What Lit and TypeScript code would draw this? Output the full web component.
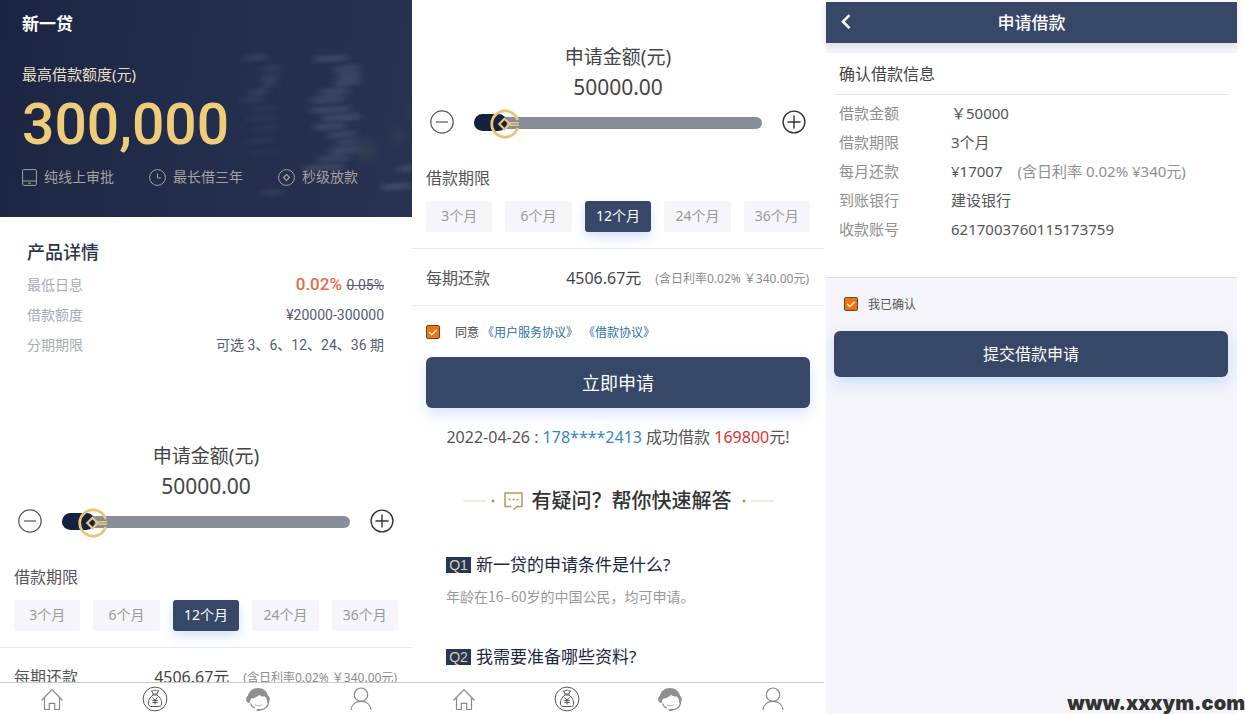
import { LitElement, html, svg, css } from "lit";
import { customElement, property, state } from "lit/decorators.js";

const base = css`
  * {
    box-sizing: border-box;
  }
  button {
    font-family: inherit;
    border: 0;
    padding: 0;
    margin: 0;
    cursor: pointer;
  }
  a {
    text-decoration: none;
  }
  .check {
    appearance: none;
    flex: none;
    width: 14px;
    height: 14px;
    margin: 0;
    border: 1px solid #5d4a3c;
    border-radius: 2px;
    background: #ee7410
      url("data:image/svg+xml,%3Csvg xmlns='http://www.w3.org/2000/svg' viewBox='0 0 12 12'%3E%3Cpath d='M2.2 6l2.6 2.7 5-5' fill='none' stroke='%23ffe9d2' stroke-width='1.4'/%3E%3C/svg%3E")
      center / 12px 12px no-repeat;
  }
  .check:not(:checked) {
    background: #fff;
  }
  .primary {
    display: block;
    width: 100%;
    padding-bottom: 2px;
    border-radius: 6px;
    background: #364768;
    color: #fff;
    box-shadow: 0 6px 14px rgba(150, 190, 245, 0.4);
  }
`;

@customElement("loan-form")
export class LoanForm extends LitElement {
  @property({ type: Number }) amount = 50000;
  @property({ type: Number }) months = 12;

  static styles = [
    base,
    css`
      :host {
        display: block;
        color: #444;
      }
      .top {
        padding: 42px 0 16px;
        border-bottom: 1px solid #e6e8ec;
      }
      .caption,
      .amount {
        display: block;
        text-align: center;
        line-height: 30px;
      }
      .caption {
        font-size: 19px;
      }
      .amount {
        font-size: 21px;
      }
      .slider {
        display: flex;
        align-items: center;
        gap: 20px;
        height: 40px;
        padding: 0 18px;
      }
      .step {
        flex: none;
        width: 24px;
        height: 24px;
        background: none;
      }
      .step svg {
        display: block;
      }
      .track {
        position: relative;
        flex: 1;
        display: flex;
        align-items: center;
        height: 32px;
        padding-top: 2px;
      }
      .track::before {
        content: "";
        flex: 1;
        height: 12px;
        border-radius: 6px;
        background: #888d9a;
      }
      .fill {
        position: absolute;
        left: 0;
        top: 8px;
        height: 17px;
        border-radius: 9px;
        background: #14213f;
      }
      .range {
        appearance: none;
        position: absolute;
        inset: 0;
        width: 100%;
        height: 32px;
        margin: 0;
        background: none;
      }
      .range::-webkit-slider-thumb {
        appearance: none;
        width: 30px;
        height: 30px;
        margin-top: 3px;
        background: url("data:image/svg+xml,%3Csvg xmlns='http://www.w3.org/2000/svg' viewBox='0 0 30 30' fill='none' stroke='%23e9c576'%3E%3Cpath d='M27.6 18.8A13.2 13.2 0 1 1 27.6 11.2' stroke-width='2.8'/%3E%3Cpath d='M14.5 9.8L19.7 15l-5.2 5.2L9.300 15z' stroke-width='2.200'/%3E%3Cpath d='M19.500 13.800H29M19.500 16.200H29' stroke-width='1.600'/%3E%3C/svg%3E")
          center / 30px 30px no-repeat;
      }
      .label {
        margin: 22px 14px 9px;
        font-size: 16px;
        line-height: 28px;
        font-weight: 400;
        color: #555;
      }
      .terms {
        display: grid;
        grid-template-columns: repeat(5, 1fr);
        gap: 13px;
        padding: 0 14px;
      }
      .term {
        height: 31px;
        padding-bottom: 2px;
        border-radius: 3px;
        background: #f5f5fa;
        color: #999;
        font-size: 14px;
        line-height: 29px;
      }
      .term.on {
        background: #364768;
        color: #fff;
        box-shadow: 0 5px 12px rgba(150, 190, 245, 0.45);
      }
      .pay {
        display: flex;
        align-items: center;
        height: 57px;
        padding: 0 15px 0 14px;
        border-bottom: 1px solid #e6e8ec;
        font-size: 16px;
        white-space: nowrap;
      }
      .pay-label {
        flex: 1;
        color: #555;
      }
      .rate {
        margin-left: 14px;
        padding-top: 2px;
        font-size: 12px;
        color: #8c8c8c;
      }
    `,
  ];

  render() {
    const ratio = (this.amount - 34000) / 266000;
    return html`
      <div class="top">
        <label class="caption" for="range">申请金额(元)</label>
        <output class="amount">${this.amount.toFixed(2)}</output>
        <div class="slider">
          <button class="step" aria-label="减少" @click=${() => (this.amount -= 1000)}>
            <svg width="24" height="24" viewBox="0 0 24 24" fill="none" stroke="#555" stroke-width="1.2">
              <circle cx="12" cy="12" r="11.200" />
              <path d="M6 12H18" />
            </svg>
          </button>
          <div class="track">
            <span class="fill" style="width:calc(15px + ${ratio} * (100% - 30px) + 2px)"></span>
            <input
              id="range"
              class="range"
              type="range"
              min="34000"
              max="300000"
              step="1000"
              .value=${String(this.amount)}
              @input=${(e: Event) => (this.amount = Number((e.target as HTMLInputElement).value))}
            />
          </div>
          <button class="step" aria-label="增加" @click=${() => (this.amount += 1000)}>
            <svg width="24" height="24" viewBox="0 0 24 24" fill="none" stroke="#333" stroke-width="1.4">
              <circle cx="12" cy="12" r="10.900" />
              <path d="M5.500 12H18.500M12 5.500V18.500" />
            </svg>
          </button>
        </div>
        <h3 class="label">借款期限</h3>
        <div class="terms">
          ${[3, 6, 12, 24, 36].map(
            (m) => html`<button class="term ${m === this.months ? "on" : ""}" @click=${() => (this.months = m)}>${m}个月</button>`
          )}
        </div>
      </div>
      <div class="pay">
        <span class="pay-label">每期还款</span>
        <span>4506.67元</span>
        <span class="rate">(含日利率0.02% ￥340.00元)</span>
      </div>
    `;
  }
}

@customElement("tab-bar")
export class TabBar extends LitElement {
  static styles = css`
    :host {
      display: grid;
      grid-template-columns: repeat(4, 1fr);
      flex: none;
      border-top: 1px solid #c9c9c9;
      background: #fff;
    }
    .tab {
      display: flex;
      justify-content: center;
      padding: 3px 0 2px;
    }
    .tab svg {
      display: block;
    }
  `;

  render() {
    const icons = [
      { name: "首页", art: svg`<path d="M2.500 14.500L13 3.500L23.500 14.500M5.500 12V23.500H10.300V17.300H15.700V23.500H20.500V12" stroke="#888" stroke-width="1.200"/>` },
      {
        name: "借款",
        art: svg`<g stroke="#555" stroke-width="1"><circle cx="13" cy="13" r="11.900"/><path d="M9.500 4.800C11 5.600 11.800 4.200 13 4.200S15 5.600 16.500 4.800L14.800 8H11.200zM10.200 9H15.800M11 9C7.500 11.500 6 15 6.500 18.200C6.800 20 8 20.500 10 20.500H16C18 20.500 19.200 20 19.500 18.200C20 15 18.500 11.500 15 9M10.500 11.500L13 14.200L15.500 11.500M13 14.200V18.500M10.300 14.500H15.700M10.300 16.500H15.700"/></g>`,
      },
      {
        name: "客服",
        art: svg`<path d="M4.600 17.200C2.500 17 1.200 15.500 1.200 13.500C1.200 11.800 1.800 10.600 2.800 10C3.800 5 7.800 2 13 2S22 5 23.200 10C24.300 10.600 24.900 11.800 24.800 13.500C24.700 15.300 23.700 16.600 22 17C22.300 14 21.500 11.800 19.800 10.500C17.500 10.800 15.500 10 14 9C12 11 9 12.300 6.500 12.500C5.300 13.800 4.700 15.300 4.600 17.200z" fill="#8f8f8f"/><path d="M5.500 17.500C6.300 19.800 7.800 21.300 9.800 22.200M23.700 16C23.200 20.500 20 23.700 14.500 24" stroke="#8f8f8f" stroke-width="1.300"/><path d="M10 18.700C12 20.200 15 20.200 17 18.700" stroke="#b0b0b0"/><rect x="11.500" y="22.900" width="4" height="2.200" rx="1.100" fill="#8f8f8f"/>`,
      },
      { name: "我的", art: svg`<g stroke="#888" stroke-width="1.200"><circle cx="13" cy="8.700" r="6.700"/><path d="M3 24C3.500 18.500 7.500 15.400 13 15.400S22.500 18.500 23 24"/></g>` },
    ];
    return icons.map(
      (i) => html`<a class="tab" href="#" aria-label=${i.name}><svg width="26" height="26" viewBox="0 0 26 26" fill="none">${i.art}</svg></a>`
    );
  }
}

/* Each coin edge: x, y, width, opacity. */
const COINS = [
  [244, 55, 24, 0.5], [262, 66, 18, 0.5], [262, 75, 16, 0.5], [262, 81, 14, 0.5], [250, 89, 18, 0.5], [242, 97, 22, 0.4],
  [252, 106, 24, 0.25], [248, 116, 28, 0.2], [252, 126, 26, 0.2], [246, 138, 30, 0.16], [250, 150, 28, 0.14], [262, 190, 20, 0.4],
  [315, 56, 32, 0.7], [335, 66, 24, 0.7], [338, 73, 22, 0.75], [335, 80, 25, 0.75], [320, 89, 28, 0.7], [312, 97, 32, 0.7],
  [312, 107, 38, 0.7], [322, 115, 38, 0.75], [315, 124, 30, 0.7], [328, 132, 28, 0.65], [335, 140, 22, 0.6], [330, 148, 28, 0.7],
  [318, 156, 30, 0.6], [305, 165, 38, 0.7], [398, 166, 16, 0.8], [382, 184, 28, 0.8],
];

@customElement("product-panel")
export class ProductPanel extends LitElement {
  static styles = [
    base,
    css`
      :host {
        display: flex;
        flex-direction: column;
        min-height: 0;
        background: #fff;
      }
      .scroll {
        flex: 1;
        min-height: 0;
        overflow: hidden;
      }
      .hero {
        position: relative;
        height: 217px;
        padding: 10px 22px 0;
        background: linear-gradient(100deg, #1b2541, #212d4b 45%, #273350);
        color: #fff;
      }
      .coins {
        position: absolute;
        inset: 0;
        width: 100%;
        height: 100%;
      }
      .brand,
      .quota,
      .figure,
      .perks {
        position: relative;
        margin: 0;
      }
      .brand {
        font-size: 17px;
        line-height: 28px;
        font-weight: 700;
      }
      .quota {
        margin-top: 22px;
        font-size: 15px;
        line-height: 28px;
        color: #e5dfc6;
      }
      .figure {
        font-family: Roboto, sans-serif;
        font-size: 57px;
        line-height: 74px;
        font-weight: 500;
        color: #f0cb7a;
      }
      .perks {
        display: flex;
        gap: 35px;
        padding: 0;
        list-style: none;
        font-size: 14px;
        line-height: 30px;
        color: #a3a39f;
      }
      .perk {
        display: flex;
        align-items: center;
        gap: 7px;
        white-space: nowrap;
      }
      .details {
        padding: 20px 28px 38px 27px;
      }
      .title {
        margin: 0 0 2px;
        font-size: 18px;
        line-height: 30px;
        font-weight: 500;
        color: #2b3547;
      }
      .list {
        margin: 0;
      }
      .row {
        display: flex;
        justify-content: space-between;
        align-items: center;
        font-size: 14px;
        line-height: 30px;
        color: #a6abb5;
      }
      .value {
        margin: 0;
        font-family: Roboto, "Noto Sans CJK SC", sans-serif;
        color: #555d6e;
      }
      .hot {
        margin-right: 1px;
        font-size: 17px;
        font-weight: 500;
        color: #ea6a50;
      }
      .loan {
        padding-top: 1px;
      }
    `,
  ];

  render() {
    return html`
      <div class="scroll">
        <header class="hero">
          <svg class="coins" viewBox="0 0 412 217" preserveAspectRatio="none" aria-hidden="true">
            <defs>
              <filter id="soft"><feGaussianBlur stdDeviation="4 1.500" /></filter>
              <filter id="glow"><feGaussianBlur stdDeviation="6" /></filter>
            </defs>
            <g filter="url(#soft)" fill="#4c5874" opacity=".7">
              ${COINS.map(([x, y, w, o]) => svg`<path d="M${x} ${y}l${w} -2v7l${-w} 2z" opacity=${o}/>`)}
            </g>
            <g filter="url(#glow)" fill="#8a7c68" opacity=".2">
              <circle cx="366" cy="150" r="9" />
              <circle cx="398" cy="136" r="6" />
              <circle cx="411" cy="112" r="5" />
            </g>
          </svg>
          <h1 class="brand">新一贷</h1>
          <p class="quota">最高借款额度(元)</p>
          <p class="figure">300,000</p>
          <ul class="perks">
            <li class="perk">
              <svg width="15" height="17" viewBox="0 0 15 17" fill="none" stroke="currentColor"><rect x=".6" y=".6" width="13.800" height="15.800" rx="1" /><path d="M.6 12H14.400M6 14.200H9" /></svg>
              纯线上审批
            </li>
            <li class="perk">
              <svg width="17" height="17" viewBox="0 0 17 17" fill="none" stroke="currentColor"><circle cx="8.500" cy="8.500" r="7.900" /><path d="M8.500 4.500V9H12" /></svg>
              最长借三年
            </li>
            <li class="perk">
              <svg width="17" height="17" viewBox="0 0 17 17" fill="none" stroke="currentColor"><circle cx="8.500" cy="8.500" r="7.900" /><path d="M8.500 5.500L11.500 8.500L8.500 11.500L5.500 8.500z" stroke-width="1.200" /></svg>
              秒级放款
            </li>
          </ul>
        </header>
        <section class="details">
          <h2 class="title">产品详情</h2>
          <dl class="list">
            <div class="row"><dt>最低日息</dt><dd class="value"><span class="hot">0.02%</span> <s>0.05%</s></dd></div>
            <div class="row"><dt>借款额度</dt><dd class="value">¥20000-300000</dd></div>
            <div class="row"><dt>分期期限</dt><dd class="value">可选 3、6、12、24、36 期</dd></div>
          </dl>
        </section>
        <loan-form class="loan"></loan-form>
      </div>
      <tab-bar></tab-bar>
    `;
  }
}

@customElement("apply-panel")
export class ApplyPanel extends LitElement {
  static styles = [
    base,
    css`
      :host {
        display: flex;
        flex-direction: column;
        min-height: 0;
        padding-right: 2px;
        background: #fff;
      }
      .scroll {
        flex: 1;
        min-height: 0;
        overflow: hidden;
      }
      .apply {
        padding: 13px 14px 0;
      }
      .agree {
        display: flex;
        align-items: center;
        height: 26px;
        margin-bottom: 12px;
        font-size: 12px;
        color: #444;
        white-space: nowrap;
      }
      .agree-text {
        margin: 0 3px 0 15px;
      }
      .link {
        margin-right: 5px;
        color: #2f6fa3;
      }
      .now {
        height: 51px;
        font-size: 18px;
      }
      .notice {
        margin: 14px 0 0;
        text-align: center;
        font-size: 16px;
        line-height: 30px;
        color: #555;
        white-space: nowrap;
      }
      .phone {
        color: #3388c0;
      }
      .sum {
        color: #dc3232;
      }
      .faq-title {
        display: flex;
        align-items: center;
        justify-content: center;
        margin: 34px 0;
        font-size: 20px;
        line-height: 30px;
        font-weight: 500;
        color: #333;
        white-space: nowrap;
      }
      .bubble {
        margin: 0 9px;
      }
      .tail {
        margin-left: 10px;
      }
      .faq {
        padding: 0 20px;
      }
      .q {
        display: flex;
        align-items: center;
        gap: 5px;
        margin: 0;
        font-size: 17px;
        line-height: 30px;
        font-weight: 400;
        color: #1c2740;
      }
      .tag {
        width: 25px;
        font-family: "Liberation Sans", sans-serif;
        font-size: 14px;
        line-height: 16px;
        text-align: center;
        background: #26355a;
        color: #e0cf9c;
      }
      .a {
        margin: 2px 0 31px;
        font-family: "Noto Sans CJK SC", sans-serif;
        font-size: 14px;
        line-height: 29px;
        color: #999;
      }
    `,
  ];

  render() {
    return html`
      <div class="scroll">
        <loan-form></loan-form>
        <section class="apply">
          <div class="agree">
            <input class="check" id="agree" type="checkbox" checked />
            <label class="agree-text" for="agree">同意</label>
            <a class="link" href="#">《用户服务协议》</a>
            <a class="link" href="#">《借款协议》</a>
          </div>
          <button class="primary now">立即申请</button>
          <p class="notice">2022-04-26 : <span class="phone">178****2413</span> 成功借款 <span class="sum">169800</span>元!</p>
          <h2 class="faq-title">
            <svg width="32" height="4" viewBox="0 0 32 4"><path d="M0 2H23" stroke="#d9cfae" stroke-width=".8" /><circle cx="30" cy="2" r="1.500" fill="#a89a5c" /></svg>
            <svg class="bubble" width="19" height="18" viewBox="0 0 19 18" fill="none" stroke="#b79a55" stroke-width="1.500"><path d="M7.500 14.500H1V1H18V14.500H13.500L9.500 17.500" /><path d="M4.500 7.500H6.500M8.500 7.500H10.500M12.500 7.500H14.500" /></svg>
            有疑问？帮你快速解答
            <svg class="tail" width="32" height="4" viewBox="0 0 32 4"><circle cx="2" cy="2" r="1.500" fill="#a89a5c" /><path d="M9 2H32" stroke="#d9cfae" stroke-width=".8" /></svg>
          </h2>
          <div class="faq">
            <h3 class="q"><span class="tag">Q1</span>新一贷的申请条件是什么?</h3>
            <p class="a">年龄在16–60岁的中国公民，均可申请。</p>
            <h3 class="q"><span class="tag">Q2</span>我需要准备哪些资料?</h3>
          </div>
        </section>
      </div>
      <tab-bar></tab-bar>
    `;
  }
}

@customElement("confirm-panel")
export class ConfirmPanel extends LitElement {
  @state() private rows = [
    ["借款金额", "￥50000", ""],
    ["借款期限", "3个月", ""],
    ["每月还款", "¥17007", "(含日利率 0.02% ¥340元)"],
    ["到账银行", "建设银行", ""],
    ["收款账号", "6217003760115173759", ""],
  ];

  static styles = [
    base,
    css`
      :host {
        display: block;
        border-top: 2px solid #fff;
        background: #f4f4fa;
      }
      .bar {
        display: grid;
        grid-template-columns: 40px 1fr 40px;
        align-items: center;
        height: 41px;
        background: #364768;
        color: #fff;
        box-shadow: 0 2px 8px rgba(54, 71, 104, 0.16);
      }
      .back {
        height: 41px;
        padding-bottom: 2px;
        background: none;
      }
      .back svg {
        display: block;
        margin: 0 auto;
      }
      .heading {
        margin: 0;
        padding-bottom: 2px;
        text-align: center;
        font-size: 17px;
        font-weight: 500;
      }
      .card {
        margin-top: 10px;
        padding: 0 9px 33px 8px;
        border-bottom: 1px solid #dddde3;
        background: #fff;
      }
      .title {
        margin: 0 0 4px;
        padding: 6px 5px 5px;
        border-bottom: 1px solid #e3e3e6;
        font-size: 16px;
        line-height: 30px;
        font-weight: 400;
        color: #444;
      }
      .list {
        margin: 0;
        padding: 0 5px;
      }
      .row {
        display: grid;
        grid-template-columns: 112px 1fr;
        font-size: 15px;
        line-height: 29px;
        color: #8f8f8f;
        white-space: nowrap;
      }
      .value {
        margin: 0;
        color: #555;
      }
      .note {
        margin-left: 15px;
        color: #8f8f8f;
      }
      .foot {
        padding: 13px 9px 0 8px;
      }
      .ok {
        display: flex;
        align-items: center;
        gap: 10px;
        height: 26px;
        margin-bottom: 14px;
        padding-left: 10px;
        font-size: 12px;
        color: #555;
      }
      .send {
        height: 46px;
        font-size: 16px;
      }
    `,
  ];

  render() {
    return html`
      <header class="bar">
        <button class="back" aria-label="返回">
          <svg width="12" height="16" viewBox="0 0 12 16" fill="none" stroke="#fff" stroke-width="2.600"><path d="M9.500 1.200L3 7.700L9.500 14.200" /></svg>
        </button>
        <h1 class="heading">申请借款</h1>
      </header>
      <section class="card">
        <h2 class="title">确认借款信息</h2>
        <dl class="list">
          ${this.rows.map(
            ([k, v, note]) => html`<div class="row"><dt>${k}</dt><dd class="value">${v}${note ? html`<span class="note">${note}</span>` : ""}</dd></div>`
          )}
        </dl>
      </section>
      <section class="foot">
        <label class="ok"><input class="check" type="checkbox" checked />我已确认</label>
        <button class="primary send">提交借款申请</button>
      </section>
    `;
  }
}

@customElement("app-root")
export class AppRoot extends LitElement {
  static styles = css`
    :host {
      position: relative;
      display: grid;
      grid-template-columns: 412fr 414fr 411fr;
      grid-template-rows: 100%;
      height: 100vh;
      padding-right: 8px;
      box-sizing: border-box;
      overflow: hidden;
      background: #fff;
      font-family: "Noto Sans", "Noto Sans CJK SC", sans-serif;
    }
    .mark {
      position: absolute;
      right: 0;
      bottom: 0;
      font-family: Inter, sans-serif;
      font-size: 20px;
      line-height: 22px;
      font-weight: 900;
      color: #333;
    }
  `;

  render() {
    return html`
      <product-panel></product-panel>
      <apply-panel></apply-panel>
      <confirm-panel></confirm-panel>
      <span class="mark">www.xxxym.com</span>
    `;
  }
}
